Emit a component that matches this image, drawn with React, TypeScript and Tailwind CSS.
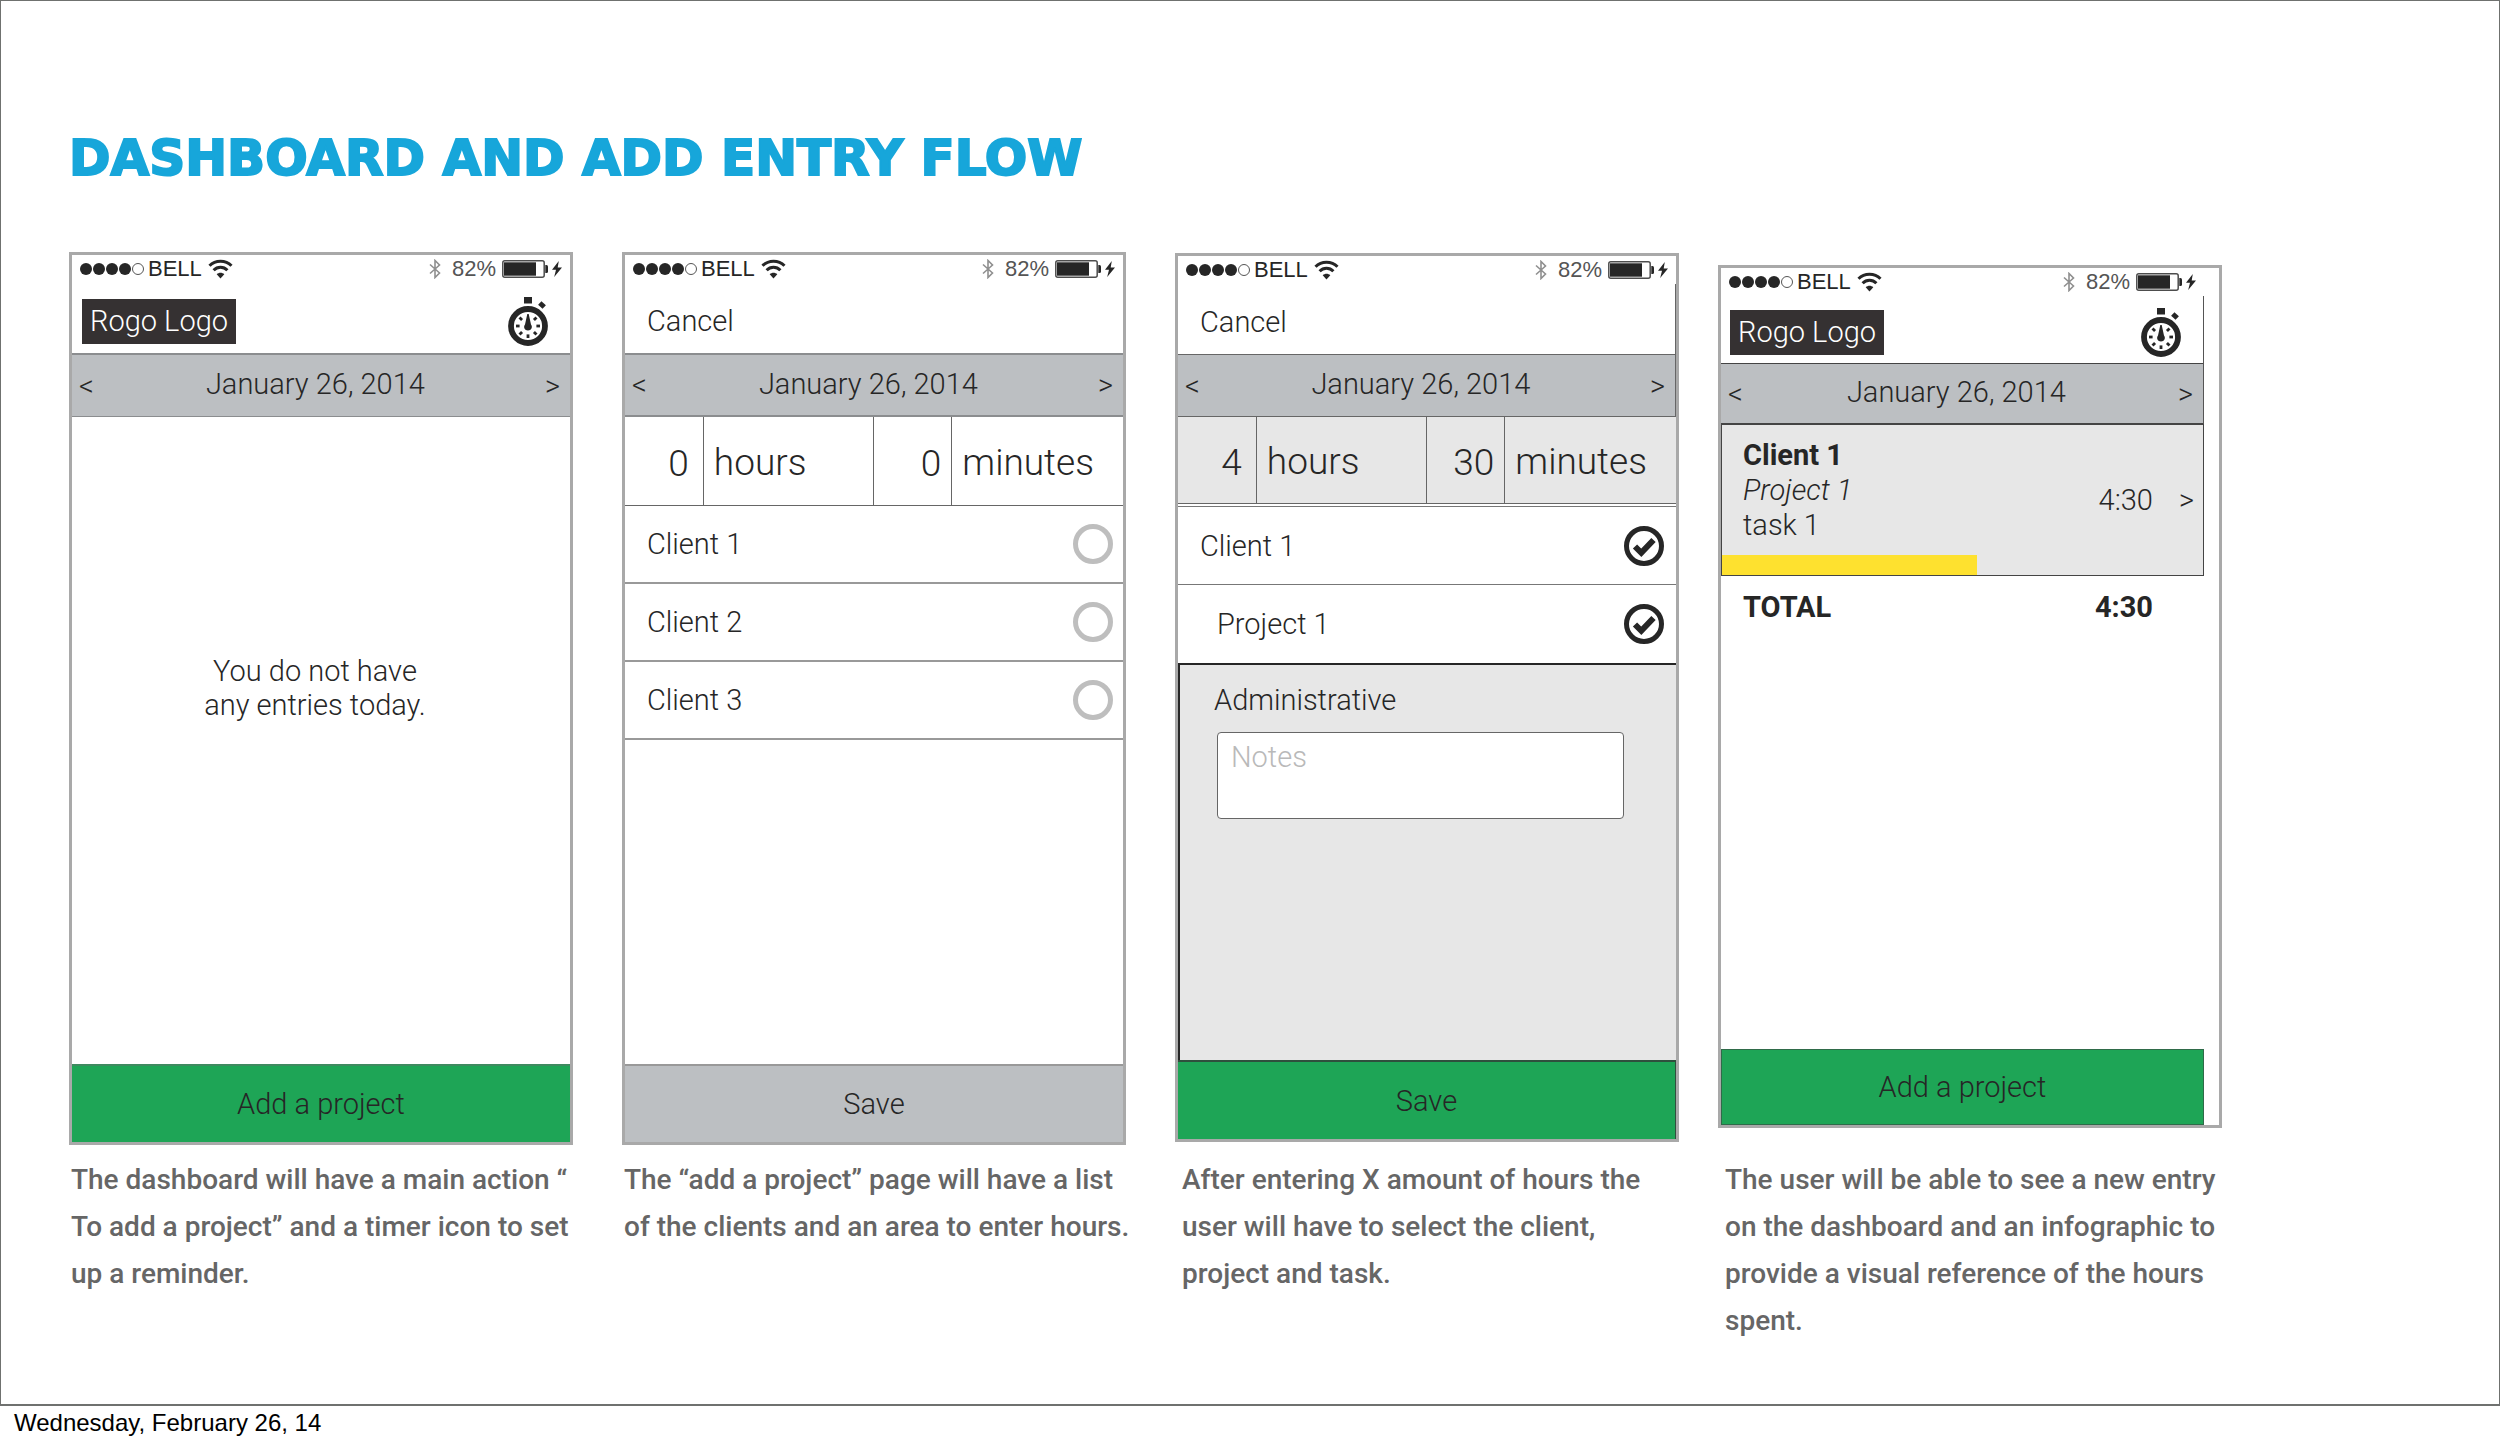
import React from 'react';

interface ScreenProps {
  caption: string;
  className?: string;
  phoneClassName?: string;
  captionClassName?: string;
  children: React.ReactNode;
}

const WifiIcon: React.FC = () => (
  <svg className="w-[25px] h-[20px]" viewBox="0 0 25 20" fill="none" stroke="#262626" aria-hidden="true">
    <path d="M1.5 6.8C7.5 .6 17.5 .6 23.5 6.8" strokeWidth="3" />
    <path d="M5.6 11.2C9.5 7.2 15.5 7.2 19.4 11.2" strokeWidth="3" />
    <path d="M12.5 19.5L8.7 15.3C10.8 13.3 14.2 13.3 16.3 15.3Z" fill="#262626" stroke="none" />
  </svg>
);

const BluetoothIcon: React.FC = () => (
  <svg className="w-[12px] h-[20px]" viewBox="0 0 12 20" fill="none" stroke="#8f8f8f" strokeWidth="1.6" aria-hidden="true">
    <path d="M1 5.5L10.5 14L6 18.5V1.5L10.5 6L1 14.5" />
  </svg>
);

const BatteryIcon: React.FC = () => (
  <svg className="w-[46px] h-[18px]" viewBox="0 0 46 18" aria-hidden="true">
    <rect x="0.8" y="0.8" width="41.4" height="16.4" rx="2" fill="#fff" stroke="#4d4d4d" strokeWidth="1.5" />
    <rect x="2" y="2.3" width="32" height="13.4" fill="#262626" />
    <path d="M43.3 5H44.5Q46 5 46 6.5V11.5Q46 13 44.5 13H43.3Z" fill="#262626" />
  </svg>
);

const BoltIcon: React.FC = () => (
  <svg className="w-[10px] h-[16px]" viewBox="0 0 10 16" aria-hidden="true">
    <path d="M6.8 0L0 8.7H4L2.2 16L10 6.6H5.7Z" fill="#262626" />
  </svg>
);

const TICKS = [45, 90, 135, 180, 225, 270, 315];

const StopwatchIcon: React.FC = () => (
  <svg className="w-[40px] h-[49px]" viewBox="0 0 40 49" fill="#262626" aria-hidden="true">
    <rect x="16" y="0" width="8" height="6.5" />
    <rect x="31" y="5.5" width="6" height="5" transform="rotate(42 34 8)" />
    <circle cx="20" cy="29" r="17" fill="#fff" stroke="#262626" strokeWidth="5.8" />
    {TICKS.map(angle => (
      <rect key={angle} x="18.6" y="17" width="2.8" height="3.6" transform={`rotate(${angle} 20 29)`} />
    ))}
    <path d="M19.3 17H20.7L23 27.5C25 30 23.3 33.5 20 33.5S15 30 17 27.5Z" />
  </svg>
);

const StatusBar: React.FC = () => (
  <div className="flex h-7 items-center justify-between pl-2 pr-2 font-['Liberation_Sans',Arial,sans-serif] text-[22px] leading-7 text-[#262626]">
    <div className="flex items-center">
      <div className="flex gap-px">
        <span className="size-3 rounded-full bg-[#262626]"></span>
        <span className="size-3 rounded-full bg-[#262626]"></span>
        <span className="size-3 rounded-full bg-[#262626]"></span>
        <span className="size-3 rounded-full bg-[#262626]"></span>
        <span className="size-3 rounded-full border border-[#555]"></span>
      </div>
      <span className="ml-1 mr-[6px]">BELL</span>
      <WifiIcon />
    </div>
    <div className="flex items-center">
      <BluetoothIcon />
      <span className="ml-[11px] mr-[6px] text-[#555]">82%</span>
      <BatteryIcon />
      <span className="ml-1"><BoltIcon /></span>
    </div>
  </div>
);

const LogoHeader: React.FC<{ className?: string }> = ({ className = '' }) => (
  <header className={`flex items-center justify-between pt-[6px] ${className}`}>
    <div className="bg-[#353132] px-2 leading-[45px] text-white">Rogo Logo</div>
    <button type="button" aria-label="Set a reminder">
      <StopwatchIcon />
    </button>
  </header>
);

const CancelHeader: React.FC = () => (
  <header className="flex h-[70px] items-center pl-[22px] pt-[6px]">
    <button type="button">Cancel</button>
  </header>
);

const DateBar: React.FC<{ className?: string }> = ({ className = '' }) => (
  <nav className={`flex items-center justify-between bg-[#bcbfc2] pl-[7px] pr-[10px] ${className}`}>
    <button type="button" aria-label="Previous day">&lt;</button>
    <span className="pb-[3px] pr-2">January 26, 2014</span>
    <button type="button" aria-label="Next day">&gt;</button>
  </nav>
);

const DurationRow: React.FC<{ id: string; hours: string; minutes: string; className?: string }> = ({ id, hours, minutes, className = '' }) => (
  <div className={`grid grid-cols-[79fr_171fr_78fr_171fr] divide-x divide-[#666] text-[37px] ${className}`}>
    <input id={`${id}-hours`} defaultValue={hours} inputMode="numeric" className="w-full min-w-0 bg-transparent pr-[14px] pt-1 text-right outline-none" />
    <label htmlFor={`${id}-hours`} className="flex items-center pl-[10px] pt-1">hours</label>
    <input id={`${id}-minutes`} defaultValue={minutes} inputMode="numeric" className="w-full min-w-0 bg-transparent pr-[10px] pt-1 text-right outline-none" />
    <label htmlFor={`${id}-minutes`} className="flex items-center pl-[10px] pt-1">minutes</label>
  </div>
);

const ClientOption: React.FC<{ name: string }> = ({ name }) => (
  <label className="flex h-[78px] items-center justify-between border-b-2 border-[#999] pl-[22px] pr-[10px]">
    {name}
    <input type="radio" name="client" className="size-10 appearance-none rounded-full border-[5px] border-[#bebebe] checked:border-[#262626]" />
  </label>
);

const CheckedOption: React.FC<{ name: string; className?: string }> = ({ name, className = '' }) => (
  <label className={`flex items-center justify-between bg-white pr-[12px] ${className}`}>
    {name}
    <span className="relative size-10">
      <input type="checkbox" defaultChecked className="peer block size-10 appearance-none rounded-full border-[5px] border-[#262626]" />
      <svg className="pointer-events-none absolute inset-0 hidden size-10 peer-checked:block" viewBox="0 0 40 40" aria-hidden="true">
        <path d="M11 20.5L17.3 26.8L29.5 14" fill="none" stroke="#262626" strokeWidth="6" />
      </svg>
    </span>
  </label>
);

const Screen: React.FC<ScreenProps> = ({ caption, className = '', phoneClassName = '', captionClassName = '', children }) => (
  <figure className={`flex min-w-0 flex-1 flex-col ${className}`}>
    <div className={`flex flex-col border-[3px] border-[#a9a9a9] text-[29px] font-light leading-[34px] ${phoneClassName}`}>
      {children}
    </div>
    <figcaption className={`mt-[11px] whitespace-pre text-[28px] font-medium leading-[47px] text-[#666] ${captionClassName}`}>
      {caption}
    </figcaption>
  </figure>
);

const App: React.FC = () => {
  return (
    <div className="bg-white font-['Roboto',sans-serif] text-[#262626]">
      <main className="min-h-[1406px] border border-b-2 border-[#6f716f] pl-[68px] pr-[277px] pt-[125px]">
        <h1 className="font-['DejaVu_Sans',sans-serif] text-[50px] font-bold leading-[64px] text-[#17a6da] [-webkit-text-stroke:2px_#17a6da]">
          DASHBOARD AND ADD ENTRY FLOW
        </h1>

        <div className="flex pt-[62px]">
          <Screen
            phoneClassName="min-h-[893px]"
            captionClassName="pl-[2px]"
            caption={'The dashboard will have a main action “\nTo add a project” and a timer icon to set\nup a reminder.'}
          >
            <StatusBar />
            <LogoHeader className="h-[70px] pl-[10px] pr-[22px]" />
            <DateBar className="h-16 border-b border-t-2 border-[#8b8d8f]" />
            <p className="grow pr-3 pt-[237px] text-center">
              You do not have
              <br />
              any entries today.
            </p>
            <button type="button" className="h-[78px] border-t-2 border-[#3f8a60] bg-[#1ea556]">Add a project</button>
          </Screen>

          <Screen
            className="ml-[49px]"
            phoneClassName="min-h-[893px]"
            captionClassName="pl-[2px]"
            caption={'The “add a project” page will have a list\nof the clients and an area to enter hours.'}
          >
            <StatusBar />
            <CancelHeader />
            <DateBar className="h-16 border-y-2 border-[#8b8d8f]" />
            <DurationRow id="empty" hours="0" minutes="0" className="h-[89px] border-b border-[#666]" />
            <div className="grow">
              <ClientOption name="Client 1" />
              <ClientOption name="Client 2" />
              <ClientOption name="Client 3" />
            </div>
            <button type="button" className="h-[78px] border-t-2 border-[#999] bg-[#bcbfc2]">Save</button>
          </Screen>

          <Screen
            className="ml-[49px]"
            phoneClassName="mb-[3px] mt-px min-h-[889px]"
            captionClassName="pl-[7px]"
            caption={'After entering X amount of hours the\nuser will have to select the client,\nproject and task.'}
          >
            <StatusBar />
            <div className="border-r border-[#666]">
              <CancelHeader />
              <DateBar className="h-[63px] border-y border-[#666]" />
            </div>
            <DurationRow id="filled" hours="4" minutes="30" className="h-[87px] border-b border-[#666] bg-[#e7e7e7]" />
            <CheckedOption name="Client 1" className="mt-[2px] h-[79px] border-y border-[#777] pl-[22px]" />
            <CheckedOption name="Project 1" className="h-[78px] pl-[39px]" />
            <div className="flex grow flex-col border-l-2 border-t-2 border-[#262626] bg-[#e7e7e7] pl-[37px] pr-[52px] pt-[18px]">
              <label htmlFor="notes" className="-ml-[3px]">Administrative</label>
              <textarea
                id="notes"
                placeholder="Notes"
                className="mt-[15px] h-[87px] resize-none rounded-[4px] border border-[#666] bg-white px-[13px] py-[7px] outline-none placeholder:text-[#b9b9b9]"
              />
            </div>
            <button type="button" className="h-[79px] border-r border-t-2 border-[#2f4f3d] bg-[#1ea556]">Save</button>
          </Screen>

          <Screen
            className="ml-[39px]"
            phoneClassName="mb-[17px] mt-[13px] min-h-[863px] pr-[15px]"
            captionClassName="pl-[7px]"
            caption={'The user will be able to see a new entry\non the dashboard and an infographic to\nprovide a visual reference of the hours\nspent.'}
          >
            <StatusBar />
            <div className="border-r border-[#555]">
              <LogoHeader className="h-[67px] pl-[9px] pr-[22px]" />
              <DateBar className="h-[61px] border-b border-t border-[#444]" />
            </div>
            <article className="flex h-[152px] flex-col justify-between border border-[#444] bg-[#e7e7e7]">
              <div className="flex items-start justify-between pl-[21px] pr-[9px] pt-[13px] leading-[35px]">
                <div>
                  <h2 className="font-bold">Client 1</h2>
                  <p className="italic">Project 1</p>
                  <p>task 1</p>
                </div>
                <div className="flex gap-[26px] pt-[45px]">
                  <span>4:30</span>
                  <button type="button" aria-label="Open entry">&gt;</button>
                </div>
              </div>
              <div className="h-5 w-[53%] bg-[#fee12f]"></div>
            </article>
            <div className="flex h-[62px] grow justify-between pl-[22px] pr-[51px] pt-[14px] font-bold">
              <span>TOTAL</span>
              <span>4:30</span>
            </div>
            <button type="button" className="h-[76px] border border-[#2f6b49] bg-[#1ea556]">Add a project</button>
          </Screen>
        </div>
      </main>

      <footer className="pl-[14px] font-['Liberation_Sans',Arial,sans-serif] text-2xl leading-[34px] text-black">
        Wednesday, February 26, 14
      </footer>
    </div>
  );
};

export default App;
